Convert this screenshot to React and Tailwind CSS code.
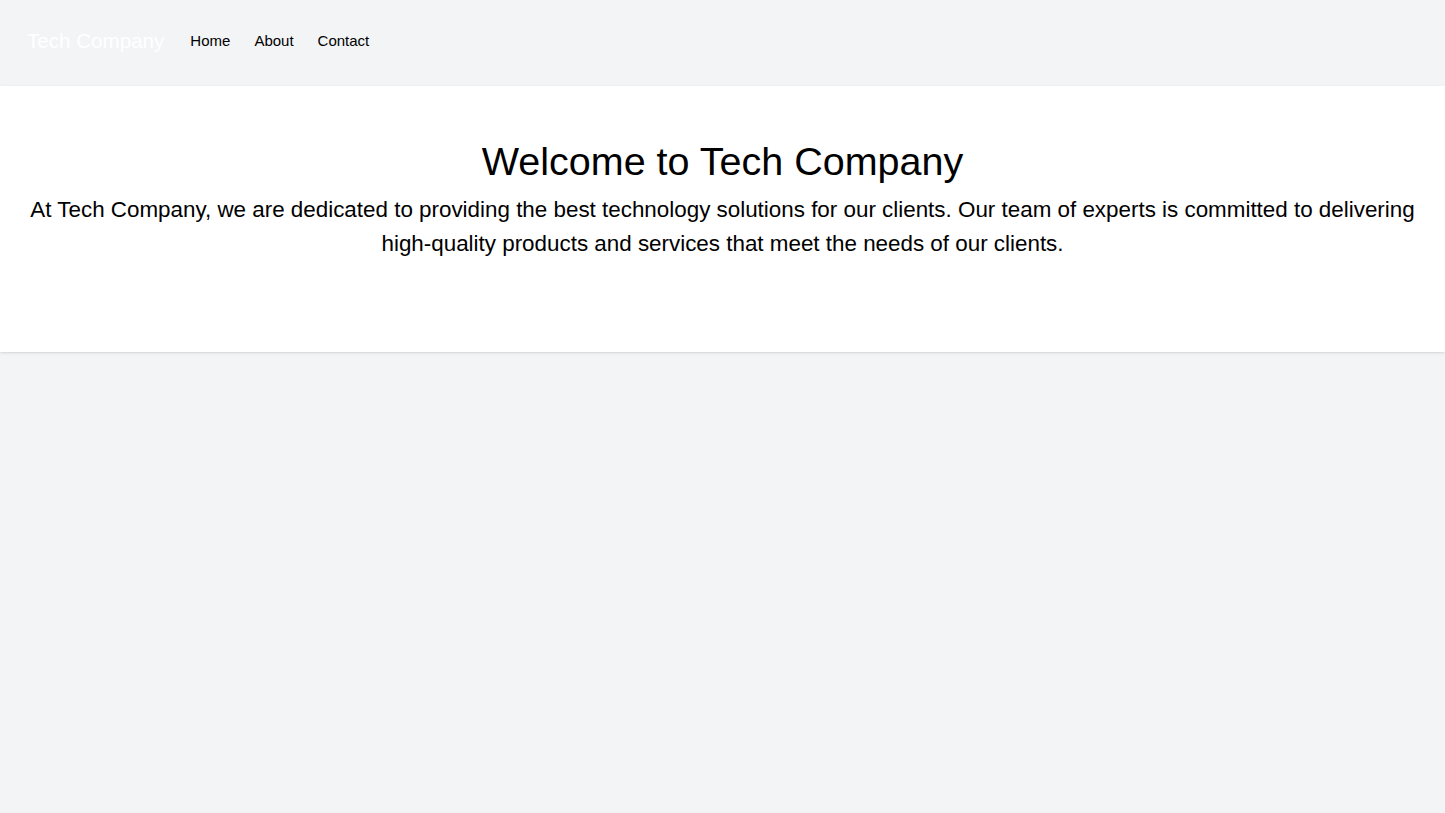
import React from "react"

export default function App() {
  return (
    <div className="min-h-screen bg-gray-100 font-['Liberation_Sans',Arial,sans-serif]">
      <nav className="flex items-center px-[27px] h-[86px] pb-[4px]">
        <span className="text-[20.6px] text-white mr-[26px]">Tech Company</span>
        <div className="flex gap-6 text-[15px] text-black">
          <a href="#">Home</a>
          <a href="#">About</a>
          <a href="#">Contact</a>
        </div>
      </nav>
      <header className="bg-white shadow h-[266px] px-6 pt-[53px] text-center">
        <h1 className="text-[39.5px] leading-[44px] text-black">Welcome to Tech Company</h1>
        <p className="text-[22.4px] leading-[34px] text-black mt-[10px]">
          At Tech Company, we are dedicated to providing the best technology solutions for our clients. Our team of experts is committed to delivering high-quality products and services that meet the needs of our clients.
        </p>
      </header>
    </div>
  )
}
